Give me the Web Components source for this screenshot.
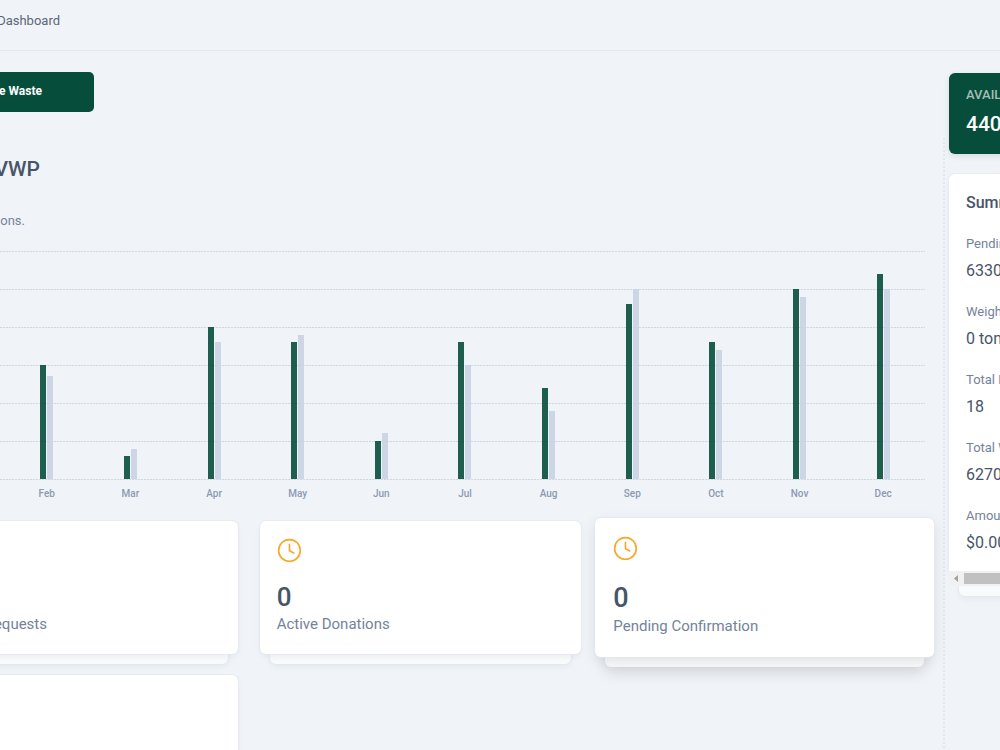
<!DOCTYPE html>
<html lang="en">
<head>
<meta charset="utf-8">
<title>Dashboard</title>
<style>
body{margin:0;background:#f0f4f9;font-family:Roboto,"Liberation Sans",sans-serif;color:#74839a;overflow:hidden}
</style>
</head>
<body>
<dash-page></dash-page>
<script>
const define=(name,css,render)=>customElements.define(name,class extends HTMLElement{
  connectedCallback(){
    if(this.shadowRoot)return;
    const t=document.createElement('template');
    t.innerHTML=`<style>*{box-sizing:border-box}${css}</style>${render(this)}`;
    this.attachShadow({mode:'open'}).append(t.content.cloneNode(true));
  }
});

/* Top bar with the current place in the breadcrumb */
define('dash-header',`
:host{display:block;border-bottom:1px solid #e2e8f0}
nav{display:flex;justify-content:flex-end;align-items:center;width:60px;height:50px;padding-bottom:8px}
a{color:#5a6678;text-decoration:none;font-size:13px;line-height:20px}
`,()=>`<nav aria-label="Breadcrumb"><a href="#">Dashboard</a></nav>`);

define('dash-button',`
:host{display:block}
button{display:flex;justify-content:flex-end;width:94px;height:40px;border:0;border-radius:0 5px 5px 0;
 background:#064e3b;color:#fff;font:700 12px/16px Roboto,sans-serif;padding:11px 52px 0 0;white-space:nowrap}
`,()=>`<button type="button"><slot></slot></button>`);

/* Paired monthly bars, values on a 0-60 scale */
define('bar-chart',`
:host{display:block;padding-right:19px}
.plot{position:relative;height:228px}
.lines{position:absolute;inset:0;display:flex;flex-direction:column;justify-content:space-between;margin-bottom:-1px}
.lines i{height:1px;background:repeating-linear-gradient(90deg,#d0d8e4 0 2px,#e9eef4 2px 3px)}
.bars,.months{display:grid;grid-template-columns:repeat(11,1fr);padding-left:5px}
.bars{position:relative;height:100%}
.pair{display:flex;gap:1px;justify-content:center;align-items:flex-end;height:100%}
.pair b{width:6px;background:#064e3b;opacity:.9}
.pair b+b{background:#c8d3e1}
.months{padding-top:8px;font-size:10px;line-height:14px;font-weight:500;color:#8b9ab0;text-align:center}
`,()=>{
  const d=[['Feb',30,27],['Mar',6,8],['Apr',40,36],['May',36,38],['Jun',10,12],['Jul',36,30],['Aug',24,18],['Sep',46,50],['Oct',36,34],['Nov',50,48],['Dec',54,50]];
  return `<div class="plot"><div class="lines">${'<i></i>'.repeat(7)}</div><div class="bars">${d.map(([m,a,b])=>`<div class="pair"><b style="height:calc(100% * ${a} / 60)"></b><b style="height:calc(100% * ${b} / 60)"></b></div>`).join('')}</div></div>
  <div class="months">${d.map(([m])=>`<span>${m}</span>`).join('')}</div>`;
});

/* White card with a second sheet showing beneath it */
define('stat-card',`
:host{display:block;position:relative;height:133px}
:host::before{content:"";position:absolute;left:10px;right:10px;bottom:-10px;height:40px;border-radius:6px;background:#f8fafc;box-shadow:0 0 0 1px #e2e8f080,0 3px 6px #0000000d}
.sheet{position:relative;height:100%;background:#fff;border-radius:6px;box-shadow:0 0 0 1px #e2e8f0b0,0 3px 6px #0000000d;padding:17px}
svg{display:block;width:26px;height:26px;margin-bottom:18px}
.n{font-size:26px;line-height:30px;font-weight:500;color:#475569}
.l{font-size:15px;line-height:20px;margin-top:2px;white-space:nowrap}
:host([raised]){height:139px;margin:-3px -9px -3px -8px;z-index:1}
:host([raised])::before{box-shadow:0 6px 14px #0000001f}
:host([raised]) .sheet{padding:18px;box-shadow:0 0 0 1px #e2e8f0b0,0 4px 14px #0000001a}
:host([raised]) .n{font-size:27px;line-height:32px;margin-top:20px}
:host([cut]) .l{display:flex;justify-content:flex-end;width:114px;margin-top:76px}
`,el=>`<div class="sheet">${el.hasAttribute('value')?`
<svg viewBox="0 0 24 24" fill="none" stroke="#f9a826" stroke-width="1.5" stroke-linecap="round" stroke-linejoin="round" aria-hidden="true"><circle cx="11.500" cy="11.500" r="10"/><path d="M11.500 5.800v6l4 2"/></svg>
<div class="n">${el.getAttribute('value')}</div>`:''}<div class="l"><slot></slot></div></div>`);

define('balance-card',`
:host{display:block;width:260px;height:81px;padding:13px 17px;border-radius:6px;background:#064e3b;box-shadow:0 2px 6px #0000001a}
.l{font-size:13px;line-height:18px;font-weight:500;color:#a5beb7}
.n{font-size:21px;line-height:26px;font-weight:500;color:#fff;margin-top:7px}
`,()=>`<div class="l">AVAILABLE</div><div class="n">440</div>`);

define('summary-card',`
:host{display:block;position:relative;width:260px}
:host::before{content:"";position:absolute;left:10px;right:10px;bottom:-10px;height:40px;border-radius:6px;background:#f8fafc;box-shadow:0 0 0 1px #e2e8f080,0 3px 6px #0000000d}
.sheet{position:relative;background:#fff;border-radius:6px 6px 0 0;box-shadow:0 0 0 1px #e2e8f080,0 3px 6px #0000000d;padding:18px 17px 17px}
h2{margin:0;font-size:16px;line-height:22px;font-weight:500;color:#475569}
dl{margin:0;padding-top:20px;display:grid;gap:20px}
dt{font-size:13px;line-height:20px}
dd{margin:6px 0 0;font-size:16px;line-height:22px;color:#475569}
.scroll{position:relative;display:flex;align-items:center;height:15px;background:#f1f1f1}
.scroll svg{width:15px;height:15px}
.scroll i{flex:1;height:11px;background:#c1c1c1}
`,()=>`<div class="sheet"><h2>Summary</h2><dl>${[['Pending','6330'],['Weight','0 tons'],['Total Donations','18'],['Total Waste','6270'],['Amount','$0.00']].map(([a,b])=>`<div><dt>${a}</dt><dd>${b}</dd></div>`).join('')}</dl></div>
<div class="scroll"><svg viewBox="0 0 15 15" aria-hidden="true"><path d="M9 4v7L5 7.500z" fill="#a3a3a3"/></svg><i></i></div>`);

define('dash-page',`
:host{display:block;height:100vh;overflow:hidden}
.body{display:grid;grid-template-columns:minmax(0,1fr) 56px}
main{padding-top:21px}
h1{display:flex;justify-content:flex-end;width:40px;margin:43px 0 0;font-size:21px;line-height:28px;font-weight:500;color:#475569}
p{display:flex;justify-content:flex-end;width:25px;margin:28px 0 20px;font-size:13px;line-height:20px}
.cards{display:grid;grid-template-columns:repeat(3,1fr);gap:21px 22px;margin:20px 19px 0 -84px}
aside{position:relative;padding:22px 0 0 5px}
aside::before{content:"";position:absolute;left:-1px;top:87px;height:100vh;border-left:2px dotted #e2e7ee}
summary-card{margin-top:20px}
`,()=>`<dash-header></dash-header>
<div class="body"><main>
<dash-button>e Waste</dash-button>
<h1>VWP</h1><p>ons.</p>
<bar-chart></bar-chart>
<div class="cards"><stat-card cut>equests</stat-card><stat-card value="0">Active Donations</stat-card><stat-card value="0" raised>Pending Confirmation</stat-card><stat-card></stat-card></div>
</main><aside><balance-card></balance-card><summary-card></summary-card></aside></div>`);
</script>
</body>
</html>
